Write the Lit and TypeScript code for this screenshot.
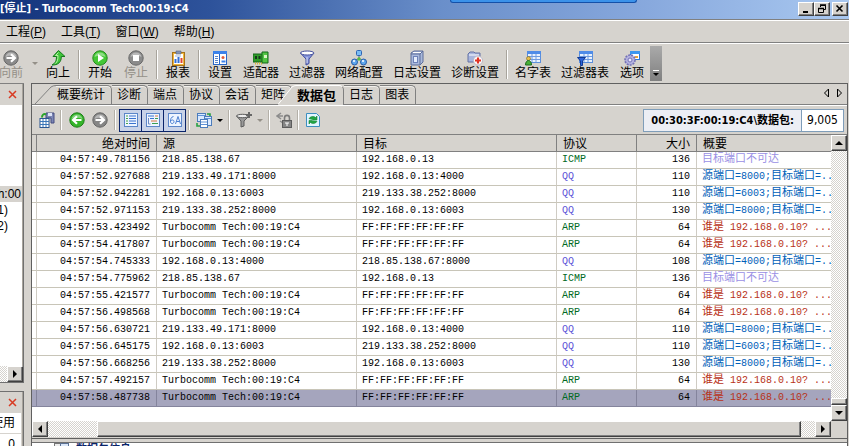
import { LitElement, html, css, svg, nothing, TemplateResult } from "lit";
import { customElement, property } from "lit/decorators.js";
import { classMap } from "lit/directives/class-map.js";

type Shape = ReturnType<typeof svg>;

const ball = (fill: string, edge: string, glyph: Shape) => svg`
  <circle cx="8" cy="8" r="7.2" fill=${fill} stroke=${edge} />
  <path d="M2.5 7a5.6 5.6 0 0 1 11 0c-3-1.600-8-1.600-11 0z" fill="#fff" opacity=".4" />${glyph}`;
const rightArrow = svg`<path d="M3.500 8h8M8 4.200L12 8l-4 3.800" fill="none" stroke="#fff" stroke-width="2.200" />`;
const leftArrow = svg`<path d="M12.500 8h-8M8 4.200L4 8l4 3.800" fill="none" stroke="#fff" stroke-width="2.200" />`;
const grid = svg`
  <rect x="2.500" y="1.500" width="13" height="11" fill="#e8f2ff" stroke="#5b8fdc" />
  <path d="M2 1h14v3H2z" fill="#4f8ce8" />
  <path d="M3 6.500h12M3 9.500h12M7 4v8M11 4v8" stroke="#6f9be0" />`;
const funnel = (light: string, dark: string) => svg`
  <path d="M1.500 3L7 9v6l3-1.500V9l5-6z" fill=${light} stroke=${dark} />
  <ellipse cx="8.200" cy="3" rx="6.700" ry="2" fill="#fff" stroke=${dark} />
  <path d="M8 7v6" stroke="#fff" opacity=".7" />`;
const sheet = svg`<rect x="1.500" y="1.500" width="13" height="13" fill="#eef5ff" stroke="#5c86c8" />`;

const ICONS: Record<string, Shape> = {
  forwardOff: ball("#8a8a8a", "#666", rightArrow),
  forward: ball("#858585", "#666", rightArrow),
  back: ball("#35b52a", "#1d7d18", leftArrow),
  up: svg`<path d="M8.500 .5L3 6.500h3.500c0 4-1 6.500-4.500 8.500 6 .3 9.500-3 9.300-8.500H15z" fill="#3fc43a" stroke="#157a1c" /><path d="M8.500 2.500L5.500 5.500H8c0 4-.5 6-2.500 8" fill="none" stroke="#b6f3a4" />`,
  start: ball("#45c736", "#238a1c", svg`<path d="M6 4l6 4-6 4z" fill="#fff" />`),
  stop: ball("#8b8b8b", "#686868", svg`<path d="M5 5h6v6H5z" fill="#fff" />`),
  report: svg`
    <rect x="2.500" y="2.500" width="12" height="13" fill="#f1b63c" stroke="#a97318" />
    <path d="M4 4h9v10H4z" fill="#fff" /><path d="M6 1h5v3H6z" fill="#8594b5" stroke="#56627e" stroke-width=".6" />
    <path d="M5.500 13V9M8.500 13V7" stroke="#3570d6" stroke-width="2" /><path d="M11.500 13V8" stroke="#df4732" stroke-width="2" />
    <path d="M5 6h6" stroke="#9eb4d8" />`,
  settings: svg`
    <rect x="1.500" y="1.500" width="13" height="13" fill="#fff" stroke="#2865c8" /><path d="M1 1h14v3H1z" fill="#3c82ea" />
    <path d="M3 6.500h3M3 8.500h3M3 10.500h3M3 12.500h3" stroke="#5a83ca" /><path d="M7.500 4v10" stroke="#2865c8" />
    <circle cx="11" cy="7.500" r="1.500" fill="#df5b3a" /><path d="M9.500 11.500h4" stroke="#3c82ea" stroke-width="2" />`,
  adapter: svg`
    <path d="M0 4h12v8H0z" fill="#2f9c28" stroke="#14661a" /><path d="M9 2h6v11H9z" fill="#52c443" stroke="#14661a" />
    <path d="M2 6h2v3H2zM5.500 6h2v3h-2z" fill="#16361c" /><path d="M11 5h3v3h-3z" fill="#d9f5c4" />
    <path d="M2 13.500h8" stroke="#d8b73a" stroke-width="2" stroke-dasharray="1 1" />`,
  filter: funnel("#8796dd", "#434f9c"),
  network: svg`
    <path d="M8 5v4M8 8L3 12M8 8l5 4" stroke="#5b6a86" fill="none" />
    <rect x="5.500" y=".5" width="5" height="5" rx="1" fill="#7bbcf4" stroke="#2e66b4" />
    <circle cx="3.500" cy="12" r="3" fill="#5fa8ee" stroke="#275da8" /><circle cx="12.500" cy="12" r="3" fill="#5fa8ee" stroke="#275da8" />
    <circle cx="8" cy="9" r="1.700" fill="#57bd42" /><circle cx="3" cy="11" r="1" fill="#fff" /><circle cx="12" cy="11" r="1" fill="#fff" />`,
  log: svg`
    <path d="M2 3l3-2h9v11l-3 3H2z" fill="#a9b9dc" stroke="#5c6d99" /><path d="M2 4h9v11M11 4l3-3" fill="none" stroke="#5c6d99" />
    <path d="M4 2.500h8" stroke="#fff" /><rect x="4.500" y="6.500" width="4" height="6" fill="#e5edfb" stroke="#6e82b8" />`,
  diagnose: svg`
    <path d="M1 4l2-2h4l1 1h5v9H1z" fill="#a8b5dd" stroke="#6472a4" /><path d="M2 5h10" stroke="#fff" />
    <circle cx="11" cy="10.500" r="4.500" fill="#fff" stroke="#b9b4c4" /><path d="M11 7.500v6M8 10.500h6" stroke="#e03224" stroke-width="2.200" />`,
  names: svg`${grid}<circle cx="3.500" cy="8.500" r="2" fill="#e8c04a" stroke="#7c6420" stroke-width=".6" /><path d="M.5 15c0-6 6-6 6 0z" fill="#47b037" stroke="#1c6a1c" />`,
  filterTable: svg`${grid}<path d="M.5 7.500h8L5.500 11v4.500h-2V11z" fill="#2b63da" stroke="#123a94" />`,
  options: svg`
    <rect x="6.500" y="1.500" width="9" height="8" fill="#fff" stroke="#2e78da" /><path d="M6 1h10v3H6z" fill="#3c96f0" /><path d="M11 6h3v2h-3z" fill="#e9a53b" />
    <circle cx="6" cy="10" r="5" fill="#b3b1df" stroke="#7471b6" stroke-width="1.600" stroke-dasharray="2 1" /><circle cx="6" cy="10" r="2" fill="#eceafd" stroke="#7471b6" />`,
  exportPackets: svg`
    <path d="M7 1h8v10h-3V6H7z" fill="#7c86b5" stroke="#454d80" /><path d="M9 1h4v3H9z" fill="#dde3f6" />
    <rect x="1" y="6.500" width="9" height="9" fill="#fff" stroke="#2a5792" /><path d="M1 9.500h9M1 12.500h9M4 7v8M7 7v8" stroke="#3a76b8" />
    <path d="M3 5.500c0-3 2-4 4-3" fill="none" stroke="#2aa52a" stroke-width="2" />`,
  list: svg`${sheet}<path d="M3 4h2M3 6.500h2M3 9h2M3 11.500h2" stroke="#48a848" /><path d="M6 4h7M6 6.500h7M6 9h7M6 11.500h7" stroke="#3a73d0" />`,
  tree: svg`${sheet}<path d="M3 4h6M5 6.500h4" stroke="#3a73d0" /><path d="M10 4h3M6 9h6" stroke="#d9763c" /><path d="M10 6.500h3M7 11.500h6" stroke="#3c9d53" /><path d="M3.500 6v6h2" stroke="#6f8cc2" fill="none" />`,
  hex: svg`${sheet}<path d="M6.500 4.500C4 5 3.500 7 3.500 9.500c0 3 3.500 2.500 3.500 0 0-2-3-2-3.500 0M8.500 12L11 4.500l2.500 7.500M9.500 9.500h3" fill="none" stroke="#4a7fd2" />`,
  windows: svg`
    <rect x="1.500" y="1.500" width="8" height="8" fill="#dbeaff" stroke="#4c7cbb" /><rect x="8.500" y="4.500" width="7" height="9" fill="#dbeaff" stroke="#4c7cbb" />
    <rect x="4.500" y="7.500" width="7" height="8" fill="#fff" stroke="#4c7cbb" /><path d="M2 3.500h7M9 6.500h6M5 10h6M5 12.500h6" stroke="#5f92d8" />
    <path d="M11 2h3v2M1 11v3h3" fill="none" stroke="#27a045" stroke-width="1.600" />`,
  filterOff: svg`<path d="M.5 4L5 9v6l3-1V9l5-5z" fill="#9a9a9a" stroke="#5b5b5b" /><ellipse cx="6.500" cy="4" rx="6" ry="1.700" fill="#ededed" stroke="#5b5b5b" /><path d="M13 0v6M10 3h6" stroke="#666" stroke-width="2" />`,
  lock: svg`
    <path d="M5 1L1 4l4 3M1 4h6M4 9l3 2" fill="none" stroke="#8c8c8c" stroke-width="1.500" />
    <path d="M8.500 8V6c0-3.500 5-3.500 5 0v2" fill="none" stroke="#7c7c7c" stroke-width="1.600" />
    <rect x="6.500" y="8.500" width="9" height="7" fill="#858585" stroke="#5c5c5c" /><path d="M9 11h4M11 11v3" stroke="#fff" />`,
  refresh: svg`
    <path d="M1.500 1.500h10l3 3v10h-13z" fill="#e2f5ff" stroke="#3c8fc0" /><path d="M4 7c1-3 5-3 6.500-1.500L12 4v4H8M12 9c-1 3-5 3-6.500 1.500L4 12V8.500h3.500" fill="#21a343" stroke="#178535" stroke-width=".6" />`,
  pane: svg`<rect x=".5" y=".5" width="6" height="12" fill="#eee" stroke="#777" /><rect x="6.500" y=".5" width="8" height="12" fill="#dbe8fa" stroke="#5c7396" />`,
};

@customElement("ui-icon")
class UiIcon extends LitElement {
  @property() name = "";
  static styles = css`
    :host { display: block; width: 16px; height: 16px; }
    .art { display: block; width: 16px; height: 16px; }
  `;
  render() {
    return html`<svg class="art" viewBox="0 0 16 16" aria-hidden="true">${ICONS[this.name]}</svg>`;
  }
}

interface Tool { icon: string; label: string; off?: boolean; menu?: boolean; sep?: boolean }
const TOOLS: Tool[] = [
  { icon: "forwardOff", label: "向前", off: true, menu: true },
  { icon: "up", label: "向上", sep: true },
  { icon: "start", label: "开始" },
  { icon: "stop", label: "停止", off: true, sep: true },
  { icon: "report", label: "报表", sep: true },
  { icon: "settings", label: "设置" },
  { icon: "adapter", label: "适配器" },
  { icon: "filter", label: "过滤器" },
  { icon: "network", label: "网络配置" },
  { icon: "log", label: "日志设置" },
  { icon: "diagnose", label: "诊断设置", sep: true },
  { icon: "names", label: "名字表" },
  { icon: "filterTable", label: "过滤器表" },
  { icon: "options", label: "选项" },
];
const MENUS = [["工程", "P"], ["工具", "T"], ["窗口", "W"], ["帮助", "H"]];
const TABS = ["概要统计", "诊断", "端点", "协议", "会话", "矩阵", "数据包", "日志", "图表"];
const ACTIVE_TAB = "数据包";

const A = "192.168.0.13", B = "219.133.49.171:8000", C = "219.133.38.252:8000";
const TC = "Turbocomm Tech:00:19:C4", FF = "FF:FF:FF:FF:FF:FF";
const P8 = "源端口=8000;目标端口=...", P6 = "源端口=6003;目标端口=...", P4 = "源端口=4000;目标端口=...";
const WHO = "谁是 192.168.0.10? ...", NO = "目标端口不可达";
const ROWS = [
  ["04:57:49.781156", "218.85.138.67", A, "ICMP", "136", NO],
  ["04:57:52.927688", B, A + ":4000", "QQ", "110", P8],
  ["04:57:52.942281", A + ":6003", C, "QQ", "110", P6],
  ["04:57:52.971153", C, A + ":6003", "QQ", "130", P8],
  ["04:57:53.423492", TC, FF, "ARP", "64", WHO],
  ["04:57:54.417807", TC, FF, "ARP", "64", WHO],
  ["04:57:54.745333", A + ":4000", "218.85.138.67:8000", "QQ", "108", P4],
  ["04:57:54.775962", "218.85.138.67", A, "ICMP", "136", NO],
  ["04:57:55.421577", TC, FF, "ARP", "64", WHO],
  ["04:57:56.498568", TC, FF, "ARP", "64", WHO],
  ["04:57:56.630721", B, A + ":4000", "QQ", "110", P8],
  ["04:57:56.645175", A + ":6003", C, "QQ", "110", P6],
  ["04:57:56.668256", C, A + ":6003", "QQ", "130", P8],
  ["04:57:57.492157", TC, FF, "ARP", "64", WHO],
  ["04:57:58.487738", TC, FF, "ARP", "64", WHO],
];

const arrow = (dir: string) => html`<span class="arrow ${dir}"></span>`;
const closeX = html`<svg class="cross" viewBox="0 0 9 9" aria-hidden="true"><path d="M1 1l7 7M8 1L1 8" stroke="#d83a22" stroke-width="1.500" /></svg>`;

@customElement("app-root")
class AppRoot extends LitElement {
  static styles = css`
    :host {
      display: flex; flex-direction: column; height: 100vh; overflow: hidden;
      background: #d6d3ce; color: #000;
      font: 12px/16px "Liberation Sans", "Noto Sans CJK SC", sans-serif;
    }
    * { box-sizing: border-box; }
    button { font: inherit; color: inherit; background: none; border: 0; padding: 0; margin: 0; }
    a { color: inherit; text-decoration: none; }

    .title {
      position: relative; flex: none; display: flex; align-items: center; height: 19px; padding: 0 1px 1px 0;
      background: linear-gradient(90deg, #14347c 0%, #2e539b 25%, #6a8fca 52%, #86a7dc 75%, #a9c8f0 100%);
      color: #fff;
    }
    .title h1 { flex: 1; margin: 0; font: bold 11px/16px "DejaVu Sans Condensed", "Noto Sans CJK SC", sans-serif; white-space: nowrap; }
    .float {
      position: absolute; top: 0; left: 53%; width: 22%; height: 3px;
      background: #3b92ea; border: 1px solid #1450a8; border-top: 0; border-radius: 0 0 6px 6px;
    }
    .raised { background: #d6d3ce; border: 1px solid; border-color: #fff #404040 #404040 #fff; box-shadow: inset -1px -1px #808080; }
    .win { width: 16px; height: 14px; display: grid; place-items: center; }
    .win.last { margin-left: 2px; }
    .win svg { width: 10px; height: 10px; }

    .menu { flex: none; display: flex; gap: 15px; height: 24px; padding: 4px 6px 0; border-top: 1px solid #808080; border-bottom: 1px solid #808080; box-shadow: inset 0 1px #fff; }

    .tools { flex: none; display: flex; height: 40px; margin-left: -7px; border-top: 1px solid #fff; }
    .tool { display: flex; flex-direction: column; align-items: center; padding: 6px 5px 0; min-width: 36px; line-height: 14px; white-space: nowrap; }
    .tool.off { color: #949088; }
    .drop { display: grid; place-items: center; width: 11px; }
    .sep { width: 2px; margin: 6px 2px 4px; border-left: 1px solid #a8a49c; border-right: 1px solid #fff; }
    .more { width: 12px; display: flex; align-items: flex-end; justify-content: center; padding-bottom: 5px; margin: 2px 0; background: linear-gradient(#aaa, #808080); }
    .more .arrow { border-top-color: #000; }
    .more-mark { border-top: 1px solid #fff; padding-top: 2px; }

    .arrow { display: block; width: 0; height: 0; border: 4px solid transparent; }
    .arrow.down { border-top-color: #000; border-bottom: 0; }
    .arrow.up { border-bottom-color: #000; border-top: 0; }
    .arrow.left { border-right-color: #000; border-left: 0; }
    .arrow.right { border-left-color: #000; border-right: 0; }
    .arrow.small { border-width: 3px 3px 0; }
    .arrow.pale { border-top-color: #949088; }

    .body { flex: 1; min-height: 0; display: flex; }
    .side { flex: none; width: 24px; display: flex; flex-direction: column; gap: 8px; border-top: 1px solid #808080; overflow: hidden; }
    .panel { border-right: 1px solid #707070; box-shadow: inset -1px 0 #a8a49c; display: flex; flex-direction: column; }
    .panel.tree { flex: none; height: 299px; border-bottom: 1px solid #707070; }
    .panel.usage { flex: 1; min-height: 0; border-top: 1px solid #707070; }
    .cap { flex: none; display: flex; align-items: center; height: 21px; padding-left: 8px; }
    .cross { width: 9px; height: 9px; }
    .nodes { flex: 1; background: #fff; margin: 0 1px 0 0; padding: 81px 0 0; list-style: none; }
    .nodes li { height: 16px; display: flex; justify-content: flex-end; padding-right: 1px; }
    .nodes .on { background: #d6d3ce; }
    .nodes .kid { padding-right: 14px; }
    .hs { display: flex; height: 16px; }
    .dither { background: repeating-conic-gradient(#fff 0 25%, #d6d3ce 0 50%) 0 0 / 2px 2px; }
    .grow { flex: 1; }
    .sb { flex: none; width: 16px; height: 16px; display: grid; place-items: center; }
    .figures { background: #fff; margin-right: 2px; flex: 1; min-height: 0; overflow: hidden; }
    .figures div { height: 21px; line-height: 21px; padding-right: 6px; display: flex; justify-content: flex-end; white-space: nowrap; border-bottom: 1px solid #d6d3ce; }

    .main { flex: 1; min-width: 0; display: flex; flex-direction: column; margin: 0 1px 0 7px; border: 1px solid #606060; border-bottom: 0; }
    .tabs { flex: none; display: flex; align-items: flex-end; height: 21px; padding: 0 4px 0 2px; border-bottom: 1px solid #808080; }
    .tab { height: 19px; padding: 0 6px 0 5px; border: 1px solid #808080; border-width: 1px 1px 0 0; border-radius: 0 5px 0 0; white-space: nowrap; box-shadow: inset 0 1px #f2f0ec; }
    .tab.first, .tab.on { padding-left: 1px; }
    .tab.on { position: relative; height: 20px; margin-bottom: -1px; font-weight: bold; font-size: 13px; background: #d6d3ce; border-color: #fff #808080; padding-right: 7px; box-shadow: none; }
    .slant { flex: none; width: 22px; height: 19px; }
    .slant.on { position: relative; width: 18px; height: 20px; margin: 0 0 -1px -14px; }
    .nav { display: flex; gap: 6px; margin: 0 0 6px auto; }
    .nav svg { display: block; width: 7px; height: 10px; }

    .strip { flex: none; display: flex; align-items: center; height: 29px; padding: 0 3px 0 5px; border-top: 1px solid #fff; }
    .pic { display: grid; place-items: center; width: 23px; height: 23px; }
    .pic.slim { width: 20px; }
    .pic.mid { width: 21px; }
    .pic.on { border: 1px solid #0a246a; background: #c9d3e8; margin-right: -1px; }
    .bar { width: 2px; height: 20px; margin: 0 3px; border-left: 1px solid #b4b0a8; border-right: 1px solid #fff; }
    .where { display: flex; margin-left: auto; height: 23px; border: 1px solid #7f9db9; background: #eceef4; line-height: 21px; }
    .where b { padding: 0 7px; font: bold 11px/21px "DejaVu Sans Condensed", "Noto Sans CJK SC", sans-serif; }
    .where output { border-left: 1px solid #7f9db9; background: #fff; width: 42px; padding: 0; text-align: center; font: 12px/21px "DejaVu Sans Condensed", sans-serif; }

    .view { flex: 1; min-height: 0; display: flex; border-top: 1px solid #808080; }
    .sheet { flex: 1; min-width: 0; background: #fff; overflow: hidden; }
    table { width: 100%; table-layout: fixed; border-collapse: separate; border-spacing: 0; font: 10px/16px "Liberation Mono", "Noto Sans CJK SC", monospace; }
    .c-mark { width: 5px; } .c-time { width: 120px; } .c-addr { width: 200px; } .c-proto { width: 80px; } .c-size { width: 60px; }
    th { height: 17px; padding: 0 6px; font: 12px/16px "Noto Sans CJK SC", sans-serif; text-align: left; background: #d6d3ce; border-right: 1px solid #808080; border-bottom: 1px solid #808080; }
    td { height: 17px; padding: 0 5px; line-height: 14px; white-space: nowrap; overflow: hidden; border-right: 1px solid #cfccc4; border-bottom: 1px solid #c8c5b8; }
    th:first-child, td:first-child { padding: 0; }
    th:last-child, td:last-child { border-right: 0; }
    .num { text-align: right; padding-right: 6px; }
    .han { font-size: 11px; line-height: 1px; }
    .green { color: #006a1e; } .violet { color: #5c52d8; } .lilac { color: #9a90e4; } .blue { color: #0060b8; } .red { color: #b83218; }
    .sel td { background: #a5a5bd; border-color: #84849c; }
    .vs { flex: none; width: 16px; display: flex; flex-direction: column; }
    .vthumb { height: 7px; }
    .hbar { flex: none; display: flex; height: 16px; }
    .hgap { width: 49px; } .hgap.end { width: 14px; }
    .corner { width: 16px; }
    .next { flex: none; display: flex; gap: 6px; height: 8px; margin-top: 1px; padding: 4px 0 0 22px; overflow: hidden; border-top: 1px solid #606060; color: #0a246a; font-weight: bold; font-size: 11px; background: linear-gradient(#d6d3ce 3px, #707070 3px 4px, #fff 4px); }
    .next span { line-height: 12px; }
  `;

  private tab(name: string, i: number): TemplateResult {
    const on = name === ACTIVE_TAB;
    const slant = on
      ? html`<svg class="slant on" viewBox="0 0 18 20" aria-hidden="true"><path d="M0 20L14 2q2-2 4-2v20z" fill="#d6d3ce" /><path d="M0 19.500L14 2q2-1.500 4-1.500" fill="none" stroke="#fff" /></svg>`
      : i === 0
        ? html`<svg class="slant" viewBox="0 0 22 19" aria-hidden="true"><path d="M1 19L17 2q2-1.500 5-1.500" fill="none" stroke="#808080" /></svg>`
        : nothing;
    return html`${slant}<button class=${classMap({ tab: true, on, first: i === 0 })} role="tab" aria-selected=${on}>${name}</button>`;
  }

  private summary(text: string) {
    return text.split(/([\u4e00-\u9fff]+)/).map((part) => (/[\u4e00-\u9fff]/.test(part) ? html`<span class="han">${part}</span>` : part));
  }

  private row(r: string[], i: number): TemplateResult {
    const qq = r[3] === "QQ";
    const tone = qq ? "blue" : r[3] === "ARP" ? "red" : "lilac";
    return html`<tr class=${classMap({ sel: i === ROWS.length - 1 })}>
      <td></td><td class="num">${r[0]}</td><td>${r[1]}</td><td>${r[2]}</td>
      <td class=${qq ? "violet" : "green"}>${r[3]}</td><td class="num">${r[4]}</td><td class=${tone}>${this.summary(r[5])}</td>
    </tr>`;
  }

  private pic(icon: string, label: string, extra = "") {
    return html`<button class="pic ${extra}" aria-label=${label}><ui-icon name=${icon}></ui-icon></button>`;
  }

  render() {
    const bar = html`<span class="bar"></span>`;
    return html`
      <header class="title">
        <h1>[停止] - Turbocomm Tech:00:19:C4</h1>
        <span class="float"></span>
        <button class="win raised" aria-label="最小化"><svg viewBox="0 0 10 10"><path d="M2 8h5" stroke="#000" stroke-width="2" /></svg></button>
        <button class="win raised" aria-label="还原"><svg viewBox="0 0 10 10"><path d="M3.500 3V1.500h5v4H7M1.500 4.500h5v4h-5z" fill="none" stroke="#000" /><path d="M3 1h6M1 4.500h6" stroke="#000" stroke-width="1.500" /></svg></button>
        <button class="win raised last" aria-label="关闭"><svg viewBox="0 0 10 10"><path d="M1.500 1.500l6 6M7.500 1.500l-6 6" stroke="#000" stroke-width="1.600" /></svg></button>
      </header>
      <nav class="menu">${MENUS.map(([n, k]) => html`<a href="#">${n}(<u>${k}</u>)</a>`)}</nav>
      <div class="tools" role="toolbar">
        ${TOOLS.map((t) => html`
          <button class=${classMap({ tool: true, off: !!t.off })} ?disabled=${t.off}><ui-icon name=${t.icon}></ui-icon>${t.label}</button>
          ${t.menu ? html`<span class="drop">${arrow("down small pale")}</span>` : nothing}
          ${t.sep ? html`<span class="sep"></span>` : nothing}`)}
        <button class="more" aria-label="更多"><span class="more-mark">${arrow("down small")}</span></button>
      </div>
      <div class="body">
        <aside class="side">
          <section class="panel tree">
            <div class="cap"><button aria-label="关闭">${closeX}</button></div>
            <ul class="nodes"><li class="on">h:00</li><li class="kid">1)</li><li class="kid">2)</li></ul>
            <div class="hs"><span class="grow dither"></span><button class="sb raised" aria-label="向右">${arrow("right")}</button></div>
          </section>
          <section class="panel usage">
            <div class="cap"><button aria-label="关闭">${closeX}</button></div>
            <div class="figures"><div>使用</div><div>0</div></div>
          </section>
        </aside>
        <main class="main">
          <div class="tabs" role="tablist">
            ${TABS.map((t, i) => this.tab(t, i))}
            <div class="nav">
              <button aria-label="上一个"><svg viewBox="0 0 7 10"><path d="M5.500 1v8l-4-4z" fill="none" stroke="#000" /></svg></button>
              <button aria-label="下一个"><svg viewBox="0 0 7 10"><path d="M1.500 1v8l4-4z" fill="none" stroke="#000" /></svg></button>
            </div>
          </div>
          <div class="strip" role="toolbar">
            ${this.pic("exportPackets", "导出", "slim")}${bar}
            ${this.pic("back", "后退")}${this.pic("forward", "前进")}${bar}
            ${this.pic("list", "列表", "on")}${this.pic("tree", "解码", "on")}${this.pic("hex", "十六进制", "on")}${bar}
            ${this.pic("windows", "布局", "mid")}<span class="drop">${arrow("down small")}</span>${bar}
            ${this.pic("filterOff", "过滤", "mid")}<span class="drop">${arrow("down small pale")}</span>${bar}
            ${this.pic("lock", "锁定", "mid")}${bar}${this.pic("refresh", "刷新", "mid")}
            <div class="where"><b>00:30:3F:00:19:C4\\数据包:</b><output>9,005</output></div>
          </div>
          <div class="view">
            <div class="sheet">
              <table>
                <colgroup><col class="c-mark" /><col class="c-time" /><col class="c-addr" /><col class="c-addr" /><col class="c-proto" /><col class="c-size" /><col /></colgroup>
                <thead><tr><th></th><th class="num">绝对时间</th><th>源</th><th>目标</th><th>协议</th><th class="num">大小</th><th>概要</th></tr></thead>
                <tbody>${ROWS.map((r, i) => this.row(r, i))}</tbody>
              </table>
            </div>
            <div class="vs">
              <button class="sb raised" aria-label="向上滚动">${arrow("up")}</button>
              <span class="grow dither"></span><span class="vthumb raised"></span>
              <button class="sb raised" aria-label="向下滚动">${arrow("down")}</button>
            </div>
          </div>
          <div class="hbar">
            <button class="sb raised" aria-label="向左滚动">${arrow("left")}</button>
            <span class="hgap dither"></span><span class="grow raised"></span><span class="hgap end dither"></span>
            <button class="sb raised" aria-label="向右滚动">${arrow("right")}</button><span class="corner"></span>
          </div>
          <div class="next"><ui-icon name="pane"></ui-icon><span>数据包信息</span></div>
        </main>
      </div>
    `;
  }
}
